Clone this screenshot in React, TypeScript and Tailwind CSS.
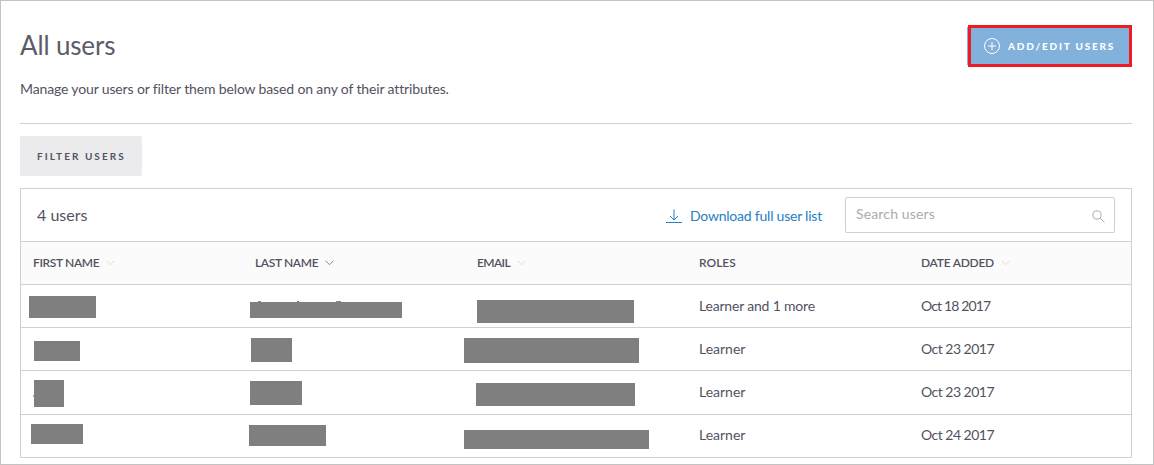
import React from "react";

type Row = {
  height: string;
  pad: string;
  masks: [string, string, string];
  roles: string;
  rolesTracking: string;
  date: string;
  dateTracking: string;
};

const rows: Row[] = [
  {
    height: "h-[43px]",
    pad: "pt-[10px]",
    masks: [
      "ml-[8px] mt-[11px] w-[67px] h-[22px]",
      "ml-[7px] mt-[17px] w-[152px] h-[16px]",
      "ml-[12px] mt-[15px] w-[157px] h-[23px]",
    ],
    roles: "Learner and 1 more",
    rolesTracking: "tracking-[-0.19px]",
    date: "Oct 18 2017",
    dateTracking: "tracking-[-0.85px]",
  },
  {
    height: "h-[43px]",
    pad: "pt-[10px]",
    masks: [
      "ml-[13px] mt-[13px] w-[46px] h-[20px]",
      "ml-[8px] mt-[10px] w-[41px] h-[24px]",
      "-ml-px mt-[10px] w-[175px] h-[25px]",
    ],
    roles: "Learner",
    rolesTracking: "tracking-normal",
    date: "Oct 23 2017",
    dateTracking: "tracking-[-0.52px]",
  },
  {
    height: "h-[44px]",
    pad: "pt-[10px]",
    masks: [
      "ml-[13px] mt-[9px] w-[30px] h-[27px]",
      "ml-[7px] mt-[10px] w-[52px] h-[24px]",
      "ml-[11px] mt-[12px] w-[159px] h-[23px]",
    ],
    roles: "Learner",
    rolesTracking: "tracking-normal",
    date: "Oct 23 2017",
    dateTracking: "tracking-[-0.52px]",
  },
  {
    height: "h-[42px]",
    pad: "pt-[9px]",
    masks: [
      "ml-[10px] mt-[9px] w-[52px] h-[20px]",
      "ml-[6px] mt-[10px] w-[77px] h-[21px]",
      "-ml-px mt-[15px] w-[185px] h-[19px]",
    ],
    roles: "Learner",
    rolesTracking: "tracking-normal",
    date: "Oct 24 2017",
    dateTracking: "tracking-[-0.52px]",
  },
];

const columns = [
  { label: "FIRST NAME", tracking: "tracking-[-0.35px]", chevron: "text-[#dcdce0]" },
  { label: "LAST NAME", tracking: "tracking-[-0.35px]", chevron: "text-[#85858d]" },
  { label: "EMAIL", tracking: "tracking-[-0.6px]", chevron: "text-[#dcdce0]" },
  { label: "ROLES", tracking: "tracking-normal", chevron: null },
  { label: "DATE ADDED", tracking: "tracking-[-0.25px]", chevron: "text-[#dcdce0]" },
];

function Chevron({ className }: { className: string }) {
  return (
    <svg className={className} width="9" height="6" viewBox="0 0 9 6" fill="none" stroke="currentColor">
      <path d="M0.5 0.7L4.5 4.7L8.5 0.7" />
    </svg>
  );
}

export default function App() {
  return (
    <div className="h-[465px] w-[1154px] overflow-hidden border border-[#c4c4c4] bg-white pr-[21px] pl-[19px] font-['Lato',sans-serif] text-[#52525f]">
      <header className="flex h-[67px] items-start justify-between pt-6">
        <h1 className="pt-[2px] text-[26px] leading-[36px] tracking-[-0.15px] text-[#5c5c69]">All users</h1>
        <button className="relative flex h-[42px] w-[164px] items-center border-3 border-[#ed1c24] bg-[#82b1db] pl-[13px] text-white">
          <i className="absolute top-[-1px] -left-1 h-[38px] w-px bg-[#82b1db]" />
          <svg width="16" height="16" viewBox="0 0 16 16" fill="none" stroke="currentColor">
            <circle cx="8" cy="8" r="7.5" />
            <path d="M8 4v8M4 8h8" />
          </svg>
          <span className="ml-[8px] text-[10px] font-black tracking-[1.8px] whitespace-nowrap">ADD/EDIT USERS</span>
        </button>
      </header>
      <p className="mt-[10px] h-[45px] text-[14px] leading-[22px] tracking-[-0.14px] whitespace-nowrap">
        Manage your users or filter them below based on any of their attributes.
      </p>
      <hr className="border-[#cfcfd4]" />
      <button className="mt-3 flex h-10 w-[122px] items-center rounded-[2px] bg-[#ebebed] pl-[17px] text-[10px] font-bold tracking-[2.05px] whitespace-nowrap">
        FILTER USERS
      </button>
      <section className="mt-3 w-[1112px] border border-[#cfcfd4]">
        <div className="flex h-[53px] items-center border-b border-[#cfcfd4] pr-4 pl-4">
          <span className="text-[16px]">4 users</span>
          <a className="ml-auto flex items-center gap-2 text-[14px] tracking-[-0.22px] whitespace-nowrap text-[#2580c3]">
            <svg className="mt-[3px]" width="16" height="15" viewBox="0 0 16 15" fill="none" stroke="currentColor">
              <path d="M8 0.5v10.5M4 7L8 11L12 7" />
              <path d="M0 13.5h16" />
            </svg>
            <span>Download full user list</span>
          </a>
          <label className="ml-[23px] flex h-9 w-[270px] items-center justify-between rounded-[2px] border border-[#cfcfd4] pr-[9px] pl-[10px] text-[14px] tracking-[0.15px] text-[#ababb0]">
            <span className="pb-[3px]">Search users</span>
            <svg className="mt-[2px]" width="13" height="13" viewBox="0 0 13 13" fill="none" stroke="currentColor">
              <circle cx="5" cy="5" r="4.1" />
              <path d="M8 8l4.5 4.5" />
            </svg>
          </label>
        </div>
        <div className="grid h-[43px] grid-cols-5 items-center border-b border-[#cfcfd4] bg-[#fbfbfb] text-[12px] font-semibold">
          {columns.map((c) => (
            <div key={c.label} className="flex items-center gap-[7px] pl-3 whitespace-nowrap">
              <span className={c.tracking}>{c.label}</span>
              {c.chevron && <Chevron className={c.chevron} />}
            </div>
          ))}
        </div>
        {rows.map((r, i) => (
          <div key={i} className={`${r.height} grid grid-cols-5 border-b border-[#cfcfd4] last:border-b-0`}>
            {r.masks.map((m, j) => (
              <div key={j} className="flex items-start">
                <div className={`${m} relative shrink-0 bg-[#7f7f7f]`}>
                  {i === 0 && j === 1 && (
                    <>
                      <i className="absolute -top-px left-[8px] h-px w-[3px] bg-[#85858d]" />
                      <i className="absolute -top-px left-[47px] h-px w-[2px] bg-[#74747e]" />
                      <i className="absolute -top-px left-[86px] h-px w-[5px] bg-[#85858d]" />
                    </>
                  )}
                  {i === 2 && j === 0 && <i className="absolute top-[15px] -left-px h-[2px] w-px bg-[#7fb2db]" />}
                </div>
              </div>
            ))}
            <div className={`${r.pad} ${r.rolesTracking} pl-3 text-[14px] leading-[22px]`}>{r.roles}</div>
            <div className={`${r.pad} ${r.dateTracking} pl-3 text-[14px] leading-[22px]`}>{r.date}</div>
          </div>
        ))}
      </section>
    </div>
  );
}
